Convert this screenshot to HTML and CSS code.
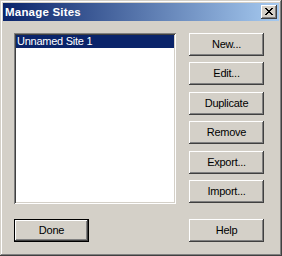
FILE: index.html
```html
<!DOCTYPE html>
<html>
<head>
<meta charset="utf-8">
<link rel="stylesheet" href="styles.css">
</head>
<body>
<div class="window">
  <div class="titlebar">
    <span class="title">Manage Sites</span>
    <div class="close">
      <svg width="8" height="7" viewBox="0 0 8 7"><path d="M0 0h2v1h1v1h2v-1h1v-1h2v1h-1v1h-1v1h-1v1h1v1h1v1h1v1h-2v-1h-1v-1h-2v1h-1v1h-2v-1h1v-1h1v-1h1v-1h-1v-1h-1v-1h-1z" fill="#000"/></svg>
    </div>
  </div>
  <div class="content">
    <div class="main">
      <div class="listbox">
        <div class="item selected">Unnamed Site 1</div>
      </div>
      <div class="buttons">
        <div class="btn">New...</div>
        <div class="btn">Edit...</div>
        <div class="btn">Duplicate</div>
        <div class="btn">Remove</div>
        <div class="btn">Export...</div>
        <div class="btn">Import...</div>
      </div>
    </div>
    <div class="footer">
      <div class="btn default"><span>Done</span></div>
      <div class="btn">Help</div>
    </div>
  </div>
</div>
</body>
</html>
```
FILE: styles.css
```css
html, body {
  margin: 0;
  padding: 0;
  background: #d4d0c8;
}
.window {
  width: 282px;
  height: 256px;
  box-sizing: border-box;
  background: #d4d0c8;
  padding: 3px;
  box-shadow: inset -1px -1px #404040, inset 1px 1px #d4d0c8, inset -2px -2px #808080, inset 2px 2px #ffffff;
  font-family: "Liberation Sans", Arial, sans-serif;
  font-size: 11px;
  letter-spacing: -0.25px;
  color: #000;
}
.titlebar {
  height: 18px;
  background: linear-gradient(to right, #0a246a, #a6caf0);
  display: flex;
  align-items: center;
  justify-content: space-between;
  padding: 0 2px 0 2px;
}
.title {
  color: #fff;
  font-weight: bold;
  font-size: 11.5px;
  letter-spacing: 0.2px;
}
.close {
  width: 16px;
  height: 14px;
  box-sizing: border-box;
  background: #d4d0c8;
  box-shadow: inset -1px -1px #404040, inset 1px 1px #ffffff, inset -2px -2px #808080, inset 2px 2px #d4d0c8;
  display: flex;
  align-items: center;
  justify-content: center;
  padding: 0 1px 1px 0;
}
.close svg { display: block; }
.content {
  padding: 12px 0 0 11px;
}
.main {
  display: flex;
  gap: 13px;
  height: 171px;
}
.listbox {
  width: 162px;
  height: 171px;
  box-sizing: border-box;
  background: #fff;
  padding: 2px;
  box-shadow: inset 1px 1px #808080, inset -1px -1px #ffffff, inset 2px 2px #404040, inset -2px -2px #d4d0c8;
}
.item {
  height: 13px;
  line-height: 13px;
  padding-left: 1px;
  white-space: nowrap;
}
.item.selected {
  background: #0a246a;
  color: #fff;
}
.buttons {
  display: flex;
  flex-direction: column;
  justify-content: space-between;
  height: 170px;
}
.btn {
  width: 75px;
  height: 23px;
  box-sizing: border-box;
  background: #d4d0c8;
  box-shadow: inset -1px -1px #404040, inset 1px 1px #ffffff, inset -2px -2px #808080, inset 2px 2px #d4d0c8;
  display: flex;
  align-items: center;
  justify-content: center;
  padding-bottom: 1px;
}
.footer {
  display: flex;
  gap: 100px;
  margin-top: 15px;
}
.btn.default {
  border: 1px solid #000;
  box-shadow: none;
  padding: 0;
}
.btn.default span {
  flex: 1;
  align-self: stretch;
  display: flex;
  align-items: center;
  justify-content: center;
  padding-bottom: 1px;
  box-shadow: inset -1px -1px #404040, inset 1px 1px #ffffff, inset -2px -2px #808080, inset 2px 2px #d4d0c8;
}
```
